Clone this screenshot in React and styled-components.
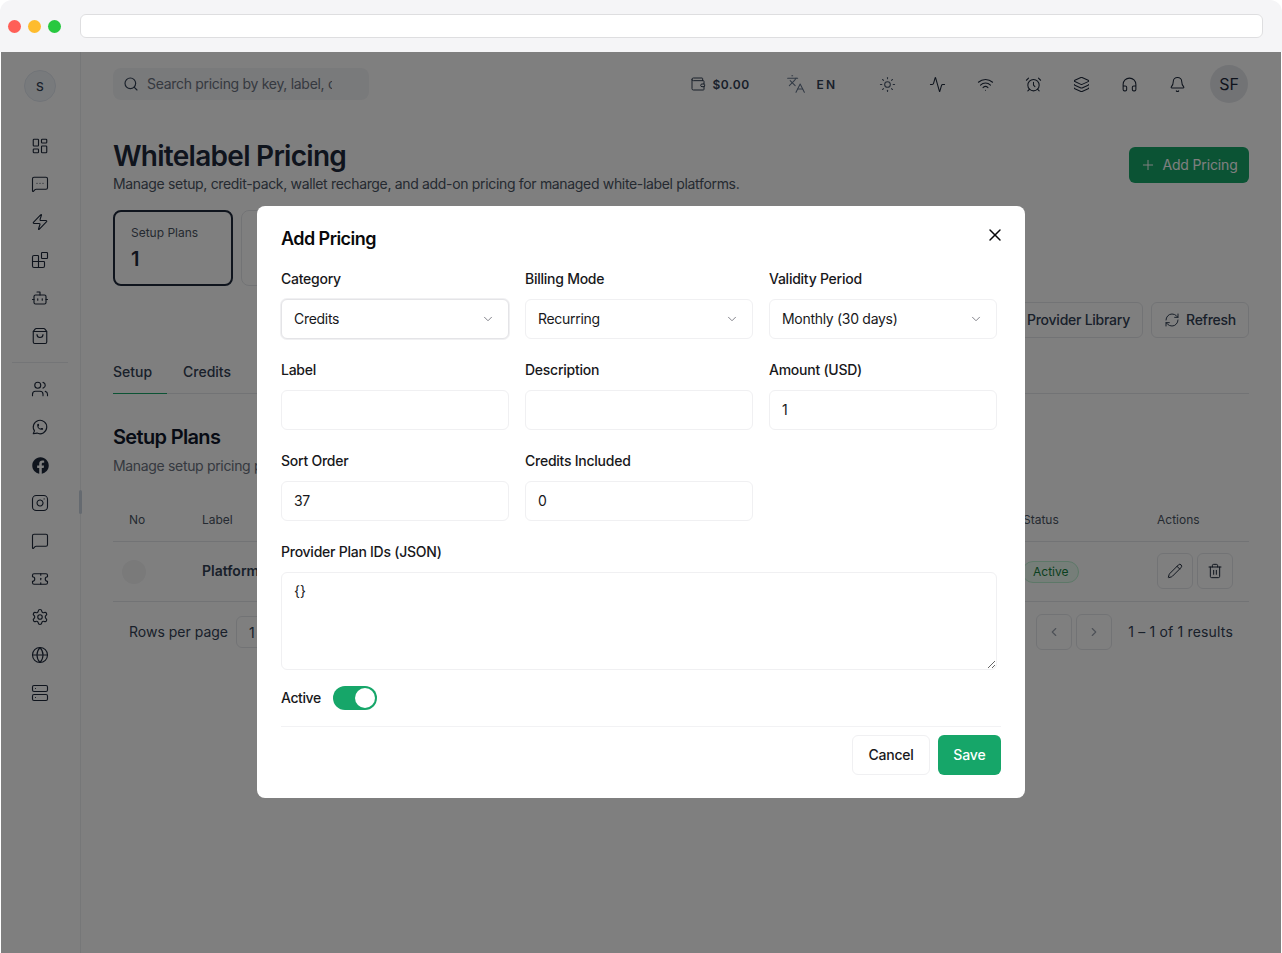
import React from 'react'
import styled, { createGlobalStyle } from 'styled-components'
import {
  LayoutDashboard, MessageSquareMore, Zap, Blocks, Bot, ShoppingBag, Users, Instagram, MessageSquare,
  Ticket, Settings, Globe, Server, Search, Wallet, Languages, Sun, Activity, Wifi, AlarmClock, Layers,
  Headphones, Bell, Plus, RefreshCw, Pencil, Trash2, ChevronLeft, ChevronRight, ChevronDown, X,
} from 'lucide-react'
import { FaFacebook } from 'react-icons/fa'
import { TbBrandWhatsapp } from 'react-icons/tb'

const GlobalStyle = createGlobalStyle`
  html, body {
    margin: 0;
    padding: 0;
    background: #fff;
  }
  * {
    box-sizing: border-box;
  }
  body {
    font-family: Inter, "Liberation Sans", sans-serif;
    color: #0f172a;
    -webkit-font-smoothing: antialiased;
  }
`

const Frame = styled.div`
  width: 1282px;
  height: 953px;
  display: flex;
  flex-direction: column;
  overflow: hidden;
  border-radius: 12px 12px 0 0;
  position: relative;
`

const TitleBar = styled.div`
  height: 52px;
  flex: none;
  background: #f5f5f7;
  display: flex;
  align-items: center;
  padding: 0 19px 0 8px;
`

const Lights = styled.div`
  display: flex;
  gap: 7px;
  margin-right: 19px;
`

const Light = styled.span`
  width: 13px;
  height: 13px;
  border-radius: 50%;
  background: ${p => p.$color};
`

const AddressBar = styled.div`
  flex: 1;
  height: 24px;
  background: #fff;
  border: 1px solid #dedee0;
  border-radius: 6px;
`

const Body = styled.div`
  flex: 1;
  display: flex;
  min-height: 0;
  position: relative;
  margin: 0 1px;
`

const Sidebar = styled.aside`
  width: 80px;
  flex: none;
  background: #fff;
  border-right: 1px solid #eceef1;
  display: flex;
  flex-direction: column;
  align-items: center;
  padding: 18px 1px 0 0;
  position: relative;
`

const Logo = styled.div`
  width: 32px;
  height: 32px;
  border-radius: 50%;
  background: #f1f5f9;
  border: 1px solid #e2e8f0;
  display: flex;
  align-items: center;
  justify-content: center;
  font-size: 12px;
  font-weight: 500;
  color: #334155;
  margin-bottom: 34px;
`

const NavGroup = styled.nav`
  display: flex;
  flex-direction: column;
  align-items: center;
  gap: 18px;
`

const NavItem = styled.div`
  width: 20px;
  height: 20px;
  display: flex;
  align-items: center;
  justify-content: center;
  color: #1e293b;
`

const NavDivider = styled.div`
  width: 56px;
  height: 1px;
  background: #e8eaee;
  margin: 16px 0;
`

const ScrollMark = styled.div`
  position: absolute;
  right: -2px;
  top: 438px;
  width: 3px;
  height: 24px;
  border-radius: 2px;
  background: #cbd5e1;
`

const Main = styled.main`
  flex: 1;
  min-width: 0;
  background: #fff;
  padding: 16px 32px 0;
`

const TopBar = styled.div`
  display: flex;
  align-items: center;
  height: 32px;
`

const SearchBox = styled.div`
  width: 256px;
  height: 32px;
  border-radius: 8px;
  background: #f3f4f6;
  display: flex;
  align-items: center;
  padding: 0 37px 0 10px;
  gap: 8px;
  color: #334155;
  flex: none;

  svg {
    flex: none;
  }
`

const SearchText = styled.span`
  font-size: 14px;
  letter-spacing: -0.3px;
  padding-bottom: 2px;
  color: #6b7280;
  white-space: nowrap;
  overflow: hidden;
`

const TopRight = styled.div`
  margin-left: auto;
  display: flex;
  align-items: center;
  color: #334155;
`

const WalletBox = styled.div`
  display: flex;
  align-items: center;
  gap: 6px;
  font-size: 12px;
  letter-spacing: 0.5px;
  font-weight: 600;
  color: #334155;
  margin-right: 36px;
`

const LangBox = styled.div`
  display: flex;
  align-items: center;
  gap: 11px;
  font-size: 12px;
  font-weight: 600;
  letter-spacing: 2px;
  color: #334155;
  margin-right: 41px;
`

const IconRow = styled.div`
  display: flex;
  align-items: center;
  gap: 30px;
  margin-right: 24px;

  & > :first-child {
    margin-right: 2px;
  }
`

const TopIcon = styled.span`
  width: 18px;
  height: 18px;
  display: flex;
  align-items: center;
  justify-content: center;
  color: ${p => p.$color || '#1e293b'};
`

const Avatar = styled.div`
  width: 38px;
  height: 38px;
  margin-right: 1px;
  border-radius: 50%;
  background: #e5e7eb;
  display: flex;
  align-items: center;
  justify-content: center;
  font-size: 16px;
  font-weight: 400;
  color: #1e293b;
`

const PageHead = styled.div`
  display: flex;
  justify-content: space-between;
  align-items: flex-start;
  margin-top: 41px;
`

const Title = styled.h1`
  margin: 0;
  font-size: 28px;
  line-height: 30px;
  font-weight: 600;
  letter-spacing: -0.72px;
  color: #1e293b;
`

const Subtitle = styled.p`
  margin: 3px 0 0;
  font-size: 14px;
  line-height: 20px;
  letter-spacing: -0.33px;
  color: #4b5563;
`

const PrimaryTop = styled.button`
  height: 36px;
  width: 120px;
  margin-top: 6px;
  padding: 0 0 2px;
  border: none;
  border-radius: 6px;
  background: #16a669;
  color: #fff;
  font: 400 14px Inter, sans-serif;
  letter-spacing: -0.15px;
  display: flex;
  align-items: center;
  justify-content: center;
  gap: 6px;

  svg {
    margin-top: 2px;
  }
`

const Stats = styled.div`
  display: flex;
  gap: 8px;
  margin-top: 16px;
`

const StatCard = styled.div`
  width: 120px;
  height: 76px;
  border-radius: 8px;
  border: ${p => (p.$active ? '2px solid #1e293b' : '1px solid #e5e7eb')};
  padding: 13px 16px;
`

const StatLabel = styled.div`
  font-size: 12px;
  line-height: 16px;
  color: #4b5563;
`

const StatValue = styled.div`
  font-size: 20px;
  line-height: 26px;
  font-weight: 600;
  margin-top: 5px;
  color: #1e293b;
`

const ToolRow = styled.div`
  display: flex;
  justify-content: flex-end;
  gap: 8px;
  margin-top: 16px;
`

const GhostButton = styled.button`
  height: 36px;
  padding: 0 12px 2px;
  border: 1px solid #e5e7eb;
  border-radius: 6px;
  background: #fff;
  color: #334155;
  font: 500 14px Inter, sans-serif;
  letter-spacing: -0.25px;
  display: flex;
  align-items: center;
  gap: 6px;

  svg {
    margin-top: 2px;
  }
`

const Tabs = styled.div`
  display: flex;
  gap: 16px;
  margin-top: 24px;
  border-bottom: 1px solid #e5e7eb;
  height: 32px;
`

const Tab = styled.div`
  font-size: 14px;
  line-height: 20px;
  font-weight: 500;
  color: #334155;
  width: ${p => p.$width}px;
  height: 32px;
  border-bottom: 1px solid ${p => (p.$active ? '#16a669' : 'transparent')};
`

const SectionTitle = styled.h2`
  margin: 31px 0 0;
  font-size: 20px;
  line-height: 24px;
  font-weight: 600;
  letter-spacing: -0.66px;
  color: #0f172a;
`

const SectionDesc = styled.p`
  margin: 7px 0 0;
  font-size: 14px;
  line-height: 20px;
  letter-spacing: -0.33px;
  color: #6b7280;
`

const Table = styled.div`
  margin-top: 25px;
`

const TableRow = styled.div`
  display: grid;
  grid-template-columns: 73px 1fr;
  align-items: center;
  padding-left: 16px;
  height: ${p => p.$height}px;
  border-bottom: 1px solid #e5e7eb;
`

const HeadCell = styled.div`
  font-size: 12px;
  padding-bottom: 3px;
  color: #4b5563;
`

const SplitCell = styled.div`
  display: grid;
  grid-template-columns: 821px 134px 1fr;
  align-items: center;
`

const NoSkeleton = styled.div`
  width: 24px;
  height: 24px;
  border-radius: 50%;
  background: #f4f4f5;
  margin-left: -7px;
`

const RowLabel = styled.div`
  font-size: 14px;
  font-weight: 600;
  padding-bottom: 2px;
  color: #334155;
`

const StatusPill = styled.span`
  display: inline-flex;
  align-items: center;
  height: 22px;
  padding: 0 10px;
  border-radius: 11px;
  margin-left: -1px;
  width: fit-content;
  background: #ecfdf3;
  border: 1px solid #bbf0d0;
  color: #15803d;
  font-size: 12px;
`

const Actions = styled.div`
  display: flex;
  gap: 4px;
  margin-bottom: 2px;
`

const SquareButton = styled.button`
  width: 36px;
  height: 36px;
  padding: 0;
  border: 1px solid #e5e7eb;
  border-radius: 6px;
  background: #fff;
  color: ${p => (p.$muted ? '#9ca3af' : '#1e293b')};
  display: flex;
  align-items: center;
  justify-content: center;
`

const Pager = styled.div`
  display: flex;
  align-items: center;
  justify-content: space-between;
  padding: 12px 16px 0;
  font-size: 14px;
  color: #334155;
`

const PagerSide = styled.div`
  display: flex;
  align-items: center;
  gap: ${p => p.$gap}px;
`

const PagerText = styled.span`
  padding-bottom: 2px;
  margin-left: ${p => p.$offset || 0}px;
  letter-spacing: ${p => p.$tracking || 0}px;
`

const RowsBox = styled.div`
  width: 60px;
  height: 32px;
  border: 1px solid #e5e7eb;
  border-radius: 6px;
  display: flex;
  align-items: center;
  padding-left: 12px;
`

const Overlay = styled.div`
  position: absolute;
  inset: 0;
  background: rgba(0, 0, 0, 0.5);
  z-index: 5;
`

const Modal = styled.div`
  position: absolute;
  left: 256px;
  top: 154px;
  width: 768px;
  height: 592px;
  z-index: 6;
  background: #fff;
  border-radius: 8px;
  padding: 20px 24px 0;
  color: #09090b;
  display: flex;
  flex-direction: column;
`

const ModalTitle = styled.h3`
  margin: 0;
  font-size: 18px;
  line-height: 26px;
  font-weight: 600;
  letter-spacing: -0.55px;
`

const CloseButton = styled.button`
  position: absolute;
  right: 20px;
  top: 19px;
  width: 20px;
  height: 20px;
  border: none;
  background: none;
  padding: 0;
  color: #09090b;
  display: flex;
  align-items: center;
  justify-content: center;
`

const FormGrid = styled.div`
  display: grid;
  grid-template-columns: repeat(3, 228px);
  column-gap: 16px;
  row-gap: 21px;
  margin-top: 17px;
`

const Field = styled.label`
  display: flex;
  flex-direction: column;
  gap: 10px;
  grid-column: ${p => (p.$full ? '1 / -1' : 'auto')};
`

const FieldLabel = styled.span`
  font-size: 14px;
  line-height: 20px;
  font-weight: 500;
  letter-spacing: -0.25px;
  color: #18181b;
`

const Control = styled.div`
  height: 40px;
  border-radius: 6px;
  border: 1px solid ${p => (p.$focus ? '#e4e4e7' : '#f0f0f2')};
  box-shadow: ${p => (p.$focus ? '0 0 0 1px #f0f0f2' : 'none')};
  background: #fff;
  display: flex;
  align-items: center;
  justify-content: space-between;
  padding: 0 13px 2px 12px;
  font-size: 14px;
  letter-spacing: -0.3px;
  color: #18181b;

  svg {
    margin-top: 2px;
  }
`

const TextArea = styled.textarea`
  display: block;
  width: 100%;
  height: 98px;
  border-radius: 6px;
  border: 1px solid #f0f0f2;
  padding: 8px 12px;
  font: 400 14px/20px Inter, sans-serif;
  color: #18181b;
  outline: none;
`

const ActiveRow = styled.div`
  display: flex;
  align-items: center;
  gap: 12px;
  margin-top: 16px;
`

const ActiveLabel = styled.span`
  font-size: 14px;
  font-weight: 500;
  letter-spacing: -0.4px;
  padding-bottom: 2px;
  color: #18181b;
`

const Toggle = styled.div`
  width: 44px;
  height: 24px;
  border-radius: 12px;
  background: #16a669;
  padding: 2px;
  display: flex;
  justify-content: flex-end;
`

const Knob = styled.div`
  width: 20px;
  height: 20px;
  border-radius: 50%;
  background: #fff;
`

const ModalFooter = styled.div`
  display: flex;
  justify-content: flex-end;
  gap: 8px;
  margin-top: 16px;
  padding-top: 8px;
  border-top: 1px solid #f2f2f4;
`

const CancelButton = styled.button`
  height: 40px;
  width: 78px;
  padding: 0 0 2px;
  border: 1px solid #f0f0f2;
  border-radius: 6px;
  background: #fff;
  color: #18181b;
  font: 500 14px Inter, sans-serif;
  letter-spacing: -0.25px;
`

const SaveButton = styled.button`
  height: 40px;
  width: 63px;
  padding: 0 0 2px;
  border: none;
  border-radius: 6px;
  background: #16a669;
  color: #fff;
  font: 500 14px Inter, sans-serif;
  letter-spacing: -0.1px;
`

const sideTop = [LayoutDashboard, MessageSquareMore, Zap, Blocks, Bot, ShoppingBag]
const sideBottom = [Users, TbBrandWhatsapp, FaFacebook, Instagram, MessageSquare, Ticket, Settings, Globe, Server]
const topIcons = [Sun, Activity, Wifi, AlarmClock, Layers, Headphones, Bell]

function SelectField({ label, value, focus }) {
  return (
    <Field>
      <FieldLabel>{label}</FieldLabel>
      <Control $focus={focus}>
        {value}
        <ChevronDown size={14} color="#71717a" strokeWidth={1.5} />
      </Control>
    </Field>
  )
}

function InputField({ label, value }) {
  return (
    <Field>
      <FieldLabel>{label}</FieldLabel>
      <Control>{value}</Control>
    </Field>
  )
}

export default function App() {
  return (
    <Frame>
      <GlobalStyle />
      <TitleBar>
        <Lights>
          <Light $color="#ff5f57" />
          <Light $color="#febc2e" />
          <Light $color="#28c840" />
        </Lights>
        <AddressBar />
      </TitleBar>
      <Body>
        <Sidebar>
          <Logo>S</Logo>
          <NavGroup>
            {sideTop.map((Icon, i) => (
              <NavItem key={i}><Icon size={18} strokeWidth={1.5} /></NavItem>
            ))}
          </NavGroup>
          <NavDivider />
          <NavGroup>
            {sideBottom.map((Icon, i) => (
              <NavItem key={i}><Icon size={Icon === FaFacebook ? 17 : 18} strokeWidth={1.5} /></NavItem>
            ))}
          </NavGroup>
          <ScrollMark />
        </Sidebar>
        <Main>
          <TopBar>
            <SearchBox>
              <Search size={16} strokeWidth={1.75} />
              <SearchText>Search pricing by key, label, category</SearchText>
            </SearchBox>
            <TopRight>
              <WalletBox><Wallet size={16} strokeWidth={1.5} />$0.00</WalletBox>
              <LangBox><Languages size={20} strokeWidth={1.25} color="#64748b" />EN</LangBox>
              <IconRow>
                {topIcons.map((Icon, i) => (
                  <TopIcon key={i} $color={i === 0 ? '#475569' : undefined}>
                    <Icon size={17} strokeWidth={1.5} />
                  </TopIcon>
                ))}
              </IconRow>
              <Avatar>SF</Avatar>
            </TopRight>
          </TopBar>
          <PageHead>
            <div>
              <Title>Whitelabel Pricing</Title>
              <Subtitle>Manage setup, credit-pack, wallet recharge, and add-on pricing for managed white-label platforms.</Subtitle>
            </div>
            <PrimaryTop><Plus size={16} strokeWidth={1.5} />Add Pricing</PrimaryTop>
          </PageHead>
          <Stats>
            <StatCard $active>
              <StatLabel>Setup Plans</StatLabel>
              <StatValue>1</StatValue>
            </StatCard>
            <StatCard />
          </Stats>
          <ToolRow>
            <GhostButton>Provider Library</GhostButton>
            <GhostButton><RefreshCw size={16} strokeWidth={1.5} />Refresh</GhostButton>
          </ToolRow>
          <Tabs>
            <Tab $active $width={54}>Setup</Tab>
            <Tab $width={80}>Credits</Tab>
          </Tabs>
          <SectionTitle>Setup Plans</SectionTitle>
          <SectionDesc>Manage setup pricing plans</SectionDesc>
          <Table>
            <TableRow $height={41}>
              <HeadCell>No</HeadCell>
              <SplitCell>
                <HeadCell>Label</HeadCell>
                <HeadCell>Status</HeadCell>
                <HeadCell>Actions</HeadCell>
              </SplitCell>
            </TableRow>
            <TableRow $height={60}>
              <NoSkeleton />
              <SplitCell>
                <RowLabel>Platform</RowLabel>
                <StatusPill>Active</StatusPill>
                <Actions>
                  <SquareButton><Pencil size={16} strokeWidth={1.5} /></SquareButton>
                  <SquareButton><Trash2 size={16} strokeWidth={1.5} /></SquareButton>
                </Actions>
              </SplitCell>
            </TableRow>
          </Table>
          <Pager>
            <PagerSide $gap={8}>
              <PagerText>Rows per page</PagerText>
              <RowsBox>1</RowsBox>
            </PagerSide>
            <PagerSide $gap={4}>
              <SquareButton $muted><ChevronLeft size={14} /></SquareButton>
              <SquareButton $muted><ChevronRight size={14} /></SquareButton>
              <PagerText $offset={12} $tracking={0.17}>1 – 1 of 1 results</PagerText>
            </PagerSide>
          </Pager>
        </Main>
        <Overlay />
        <Modal>
          <ModalTitle>Add Pricing</ModalTitle>
          <CloseButton><X size={20} strokeWidth={1.75} /></CloseButton>
          <FormGrid>
            <SelectField label="Category" value="Credits" focus />
            <SelectField label="Billing Mode" value="Recurring" />
            <SelectField label="Validity Period" value="Monthly (30 days)" />
            <InputField label="Label" value="" />
            <InputField label="Description" value="" />
            <InputField label="Amount (USD)" value="1" />
            <InputField label="Sort Order" value="37" />
            <InputField label="Credits Included" value="0" />
            <div />
            <Field $full>
              <FieldLabel>Provider Plan IDs (JSON)</FieldLabel>
              <TextArea defaultValue="{}" />
            </Field>
          </FormGrid>
          <ActiveRow>
            <ActiveLabel>Active</ActiveLabel>
            <Toggle><Knob /></Toggle>
          </ActiveRow>
          <ModalFooter>
            <CancelButton>Cancel</CancelButton>
            <SaveButton>Save</SaveButton>
          </ModalFooter>
        </Modal>
      </Body>
    </Frame>
  )
}
